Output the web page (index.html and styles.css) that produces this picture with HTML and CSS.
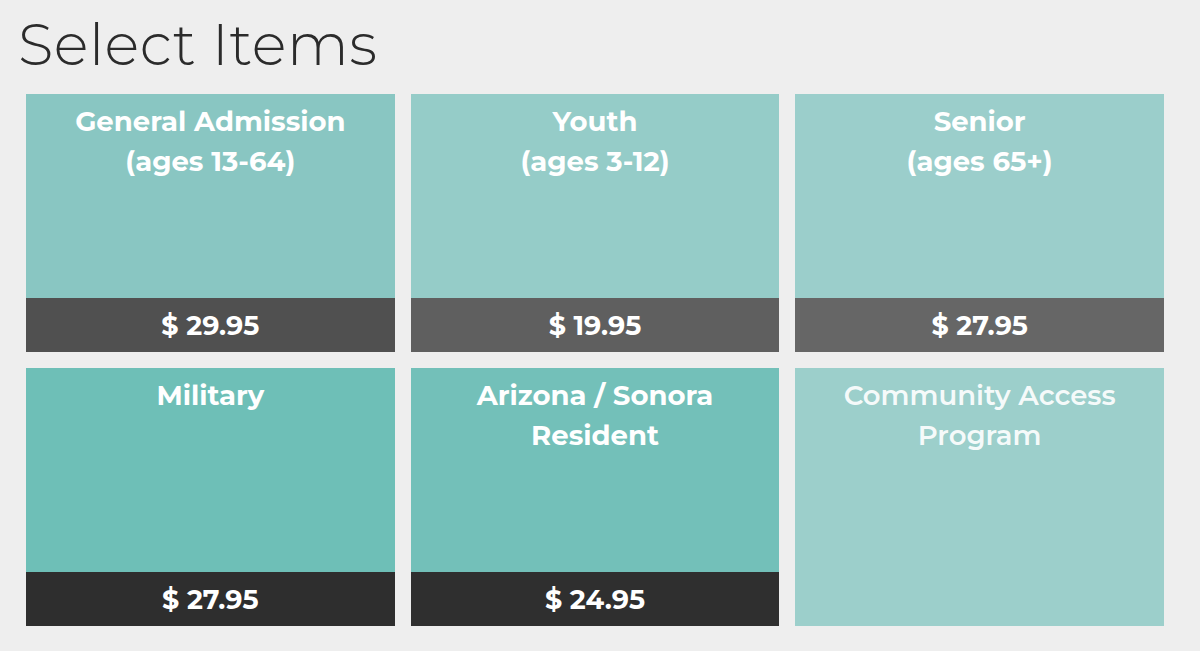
FILE: index.html
```html
<!DOCTYPE html>
<html lang="en">
<head>
    <meta charset="UTF-8">
    <meta name="viewport" content="width=device-width, initial-scale=1.0">
    <title>Select Items</title>
    <link rel="stylesheet" href="styles.css">
</head>
<body>
    <div class="page">
        <h1>Select Items</h1>
        <div class="items">
            <div class="item item-1">
                <div class="item-name">General Admission<br>(ages 13-64)</div>
                <div class="item-price">$ 29.95</div>
            </div>
            <div class="item item-2">
                <div class="item-name">Youth<br>(ages 3-12)</div>
                <div class="item-price">$ 19.95</div>
            </div>
            <div class="item item-3">
                <div class="item-name">Senior<br>(ages 65+)</div>
                <div class="item-price">$ 27.95</div>
            </div>
            <div class="item item-4">
                <div class="item-name">Military</div>
                <div class="item-price">$ 27.95</div>
            </div>
            <div class="item item-5">
                <div class="item-name">Arizona / Sonora<br>Resident</div>
                <div class="item-price">$ 24.95</div>
            </div>
            <div class="item item-6 item-free">
                <div class="item-name">Community Access<br>Program</div>
            </div>
        </div>
    </div>
</body>
</html>
```

FILE: styles.css
```css
body {
    margin: 0;
    padding: 0;
    background-color: #eeeeee;
    font-family: 'Montserrat', 'Inter', 'Noto Sans', sans-serif;
    color: #333;
}

.page {
    padding: 0 36px 0 18px;
}

h1 {
    margin: 0;
    padding-top: 9px;
    height: 85px;
    font-size: 58px;
    font-weight: 300;
    line-height: 72px;
    letter-spacing: 0.5px;
    color: #2b2b2b;
}

.items {
    display: grid;
    grid-template-columns: repeat(3, 1fr);
    grid-auto-rows: 258px;
    gap: 16px;
    margin-left: 8px;
}

.item {
    display: flex;
    flex-direction: column;
    justify-content: space-between;
    cursor: pointer;
}

.item-name {
    padding-top: 7px;
    text-align: center;
    color: #ffffff;
    font-size: 27.5px;
    font-weight: 700;
    line-height: 40px;
}

.item-price {
    height: 54px;
    display: flex;
    align-items: center;
    justify-content: center;
    color: #ffffff;
    font-size: 27px;
    font-weight: 700;
}

.item-1 { background-color: #89c6c2; }
.item-1 .item-price { background-color: #505050; }

.item-2 { background-color: #95ccc8; }
.item-2 .item-price { background-color: #5f5f5f; }

.item-3 { background-color: #9bcecb; }
.item-3 .item-price { background-color: #666666; }

.item-4 { background-color: #6ebfb7; }
.item-4 .item-price { background-color: #2e2e2e; }

.item-5 { background-color: #73c0b9; }
.item-5 .item-price { background-color: #2f2f2f; }

.item-6 { background-color: #9ccfcb; }

.item-free .item-name {
    font-weight: 600;
    color: rgba(255, 255, 255, 0.92);
}
```
